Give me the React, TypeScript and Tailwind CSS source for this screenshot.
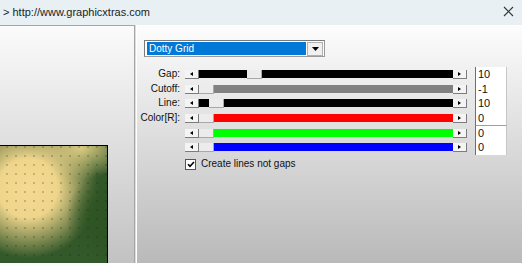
import React from "react";

type Row = {
  label: string;
  color: string;
  pre: number;
  value: string;
};

const rows: Row[] = [
  { label: "Gap:", color: "bg-black", pre: 48, value: "10" },
  { label: "Cutoff:", color: "bg-[#808080]", pre: 0, value: "-1" },
  { label: "Line:", color: "bg-black", pre: 10, value: "10" },
  { label: "Color[R]:", color: "bg-[#ff0000]", pre: 0, value: "0" },
  { label: "", color: "bg-[#00ff00]", pre: 0, value: "0" },
  { label: "", color: "bg-[#0000ff]", pre: 0, value: "0" },
];

function ArrowBtn({ dir }: { dir: "left" | "right" }) {
  return (
    <div className="w-[14px] h-[9px] bg-[#f4f4f4] border-b border-r border-[#7c7c7c] flex items-center justify-center">
      <svg width="3" height="4" viewBox="0 0 3 4">
        {dir === "left" ? (
          <polygon points="3,0 0,2 3,4" fill="#000" />
        ) : (
          <polygon points="0,0 3,2 0,4" fill="#000" />
        )}
      </svg>
    </div>
  );
}

function Slider({ row }: { row: Row }) {
  return (
    <div className="flex items-start h-[9px] w-[282px]">
      <ArrowBtn dir="left" />
      <div className="flex flex-1 h-[8px]">
        {row.pre > 0 && <div className={`${row.color} h-full`} style={{ width: row.pre }} />}
        <div className="w-[15px] h-[9px] bg-[#ececec] border-b border-r border-[#a8a8a8]" />
        <div className={`${row.color} flex-1 h-full`} />
      </div>
      <ArrowBtn dir="right" />
    </div>
  );
}

export default function App() {
  return (
    <div
      className="w-[522px] h-[263px] overflow-hidden flex flex-col text-[#111]"
      style={{ fontFamily: '"Liberation Sans", Arial, sans-serif' }}
    >
      {/* title bar */}
      <div className="h-[25px] bg-[#e8f0f4] flex items-center justify-between pl-[3px] pr-[8px] shrink-0">
        <span className="text-[11px] text-[#1c1c1c] leading-none -mt-[1px]">&gt; http://www.graphicxtras.com</span>
        <svg width="11" height="11" viewBox="0 0 11 11" className="-mt-[3px]">
          <path d="M1 1 L10 10 M10 1 L1 10" stroke="#333" strokeWidth="1.1" />
        </svg>
      </div>

      <div className="flex flex-1 min-h-0">
        {/* left panel */}
        <div className="w-[135px] border-t border-r border-[#a4a4a4] bg-[linear-gradient(to_bottom,#fbfbfb,#c2c2c2)] flex flex-col justify-end">
          <div className="relative w-[108px] h-[118px] border-t border-r border-black bg-[#33582a] bg-[image:radial-gradient(ellipse_38%_42%_at_100%_62%,#2f5424_0%,rgba(47,84,36,0.9)_45%,rgba(47,84,36,0)_100%),radial-gradient(ellipse_66%_60%_at_26%_36%,#f4da92_0%,#efd58c_42%,rgba(236,211,139,0)_100%),radial-gradient(ellipse_48%_26%_at_76%_2%,rgba(226,208,134,0.95)_0%,rgba(226,208,134,0)_100%),radial-gradient(ellipse_22%_16%_at_0%_0%,#5f6a38_0%,rgba(95,106,56,0)_100%)]">
            <div className="absolute inset-0 bg-[image:radial-gradient(circle,rgba(30,30,10,0.85)_0.6px,transparent_1px)] bg-[length:9px_9px] bg-[position:2.5px_5.5px]" />
          </div>
        </div>
        <div className="w-[1px] bg-[#dedede]" />
        <div className="w-[1px] bg-white" />

        {/* right panel */}
        <div className="flex-1 bg-[linear-gradient(to_bottom,#fdfdfd,#b9b9b9)] flex flex-col">
          {/* dropdown */}
          <div className="ml-[7px] mt-[15px] w-[181px] h-[17px] border border-t-[#7a7a7a] border-l-[#7a7a7a] border-b-[#9a9a9a] border-r-[#9a9a9a] bg-white flex items-center p-[1px]">
            <div className="flex-1 h-[13px] bg-[#0078d7] text-white text-[10px] leading-[13px] pl-[2px] ml-[1px]">
              Dotty Grid
            </div>
            <div className="w-[16px] h-[14px] ml-[1px] bg-[#f0f0f0] border border-[#b0b0b0] flex items-center justify-center">
              <svg width="7" height="4" viewBox="0 0 7 4">
                <polygon points="0,0 7,0 3.5,4" fill="#000" />
              </svg>
            </div>
          </div>

          {/* rows */}
          <div className="mt-[10px] flex flex-col">
            {rows.map((row, i) => (
              <div key={i} className="flex items-center h-[14.6px]">
                <div className="w-[43px] text-right text-[10px] leading-none text-[#111]">{row.label}</div>
                <div className="ml-[5px] pt-[1px]">
                  <Slider row={row} />
                </div>
                <div
                  className={`ml-[8px] w-[32px] h-full bg-white border-l border-[#6e6e6e] border-r border-r-[#c6c6c6] text-[11px] leading-[14px] pl-[2px] text-[#111] ${
                    i === 4 ? "border-t border-t-[#a0a0a0]" : ""
                  }`}
                >
                  {row.value}
                </div>
              </div>
            ))}
          </div>

          {/* checkbox */}
          <div className="flex items-center ml-[48px] mt-[4px]">
            <div className="w-[11px] h-[11px] bg-white border border-[#555] flex items-center justify-center">
              <svg width="8" height="7" viewBox="0 0 8 7">
                <path d="M1 3.2 L3 5.3 L7 1" stroke="#000" strokeWidth="1.6" fill="none" />
              </svg>
            </div>
            <span className="ml-[5px] text-[10px] leading-none text-[#111]">Create lines not gaps</span>
          </div>
        </div>
      </div>
    </div>
  );
}
